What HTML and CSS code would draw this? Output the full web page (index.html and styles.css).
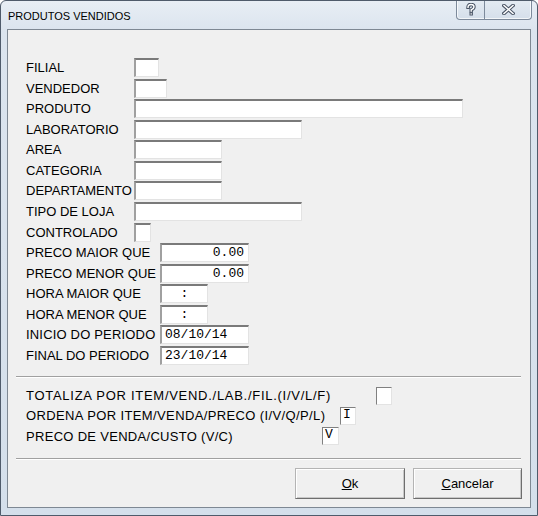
FILE: index.html
```html
<!DOCTYPE html>
<html>
<head>
<meta charset="utf-8">
<link rel="stylesheet" href="styles.css">
</head>
<body>
<div class="window">
  <div class="titlebar">
    <span class="title">PRODUTOS VENDIDOS</span>
    <div class="tbtns">
      <div class="tbtn help">
        <svg width="10" height="13" viewBox="0 0 10 13">
          <path d="M2 4.2 Q2 1.5 5 1.5 Q8 1.5 8 4 Q8 5.6 5.2 6.8 L5.2 8" fill="none" stroke="#4a5566" stroke-width="3.4" stroke-linecap="square"/>
          <rect x="3.5" y="9.3" width="3.4" height="3.2" fill="#4a5566"/>
          <path d="M2 4.2 Q2 1.5 5 1.5 Q8 1.5 8 4 Q8 5.6 5.2 6.8 L5.2 8" fill="none" stroke="#ffffff" stroke-width="1.4" stroke-linecap="square"/>
          <rect x="4.5" y="10.3" width="1.4" height="1.2" fill="#ffffff"/>
        </svg>
      </div>
      <div class="tbtn close">
        <svg width="13" height="11" viewBox="0 0 13 11">
          <path d="M2 1.5 L11 9.5 M11 1.5 L2 9.5" fill="none" stroke="#4a5566" stroke-width="3.6" stroke-linecap="square"/>
          <path d="M2 1.5 L11 9.5 M11 1.5 L2 9.5" fill="none" stroke="#ffffff" stroke-width="1.5" stroke-linecap="square"/>
        </svg>
      </div>
    </div>
  </div>
  <div class="client">
    <div class="rows">
      <div class="row"><span class="lbl l108">FILIAL</span><span class="edit w25"></span></div>
      <div class="row"><span class="lbl l108">VENDEDOR</span><span class="edit w33"></span></div>
      <div class="row"><span class="lbl l108">PRODUTO</span><span class="edit w329"></span></div>
      <div class="row"><span class="lbl l108">LABORATORIO</span><span class="edit w168"></span></div>
      <div class="row"><span class="lbl l108">AREA</span><span class="edit w88"></span></div>
      <div class="row"><span class="lbl l108">CATEGORIA</span><span class="edit w88"></span></div>
      <div class="row"><span class="lbl l108">DEPARTAMENTO</span><span class="edit w88"></span></div>
      <div class="row"><span class="lbl l108">TIPO DE LOJA</span><span class="edit w168"></span></div>
      <div class="row"><span class="lbl l108">CONTROLADO</span><span class="edit w17"></span></div>
      <div class="row"><span class="lbl l134">PRECO MAIOR QUE</span><span class="edit w89 right">0.00</span></div>
      <div class="row"><span class="lbl l134">PRECO MENOR QUE</span><span class="edit w89 right">0.00</span></div>
      <div class="row"><span class="lbl l134">HORA MAIOR QUE</span><span class="edit w48 center">:</span></div>
      <div class="row"><span class="lbl l134">HORA MENOR QUE</span><span class="edit w48 center">:</span></div>
      <div class="row"><span class="lbl l134 ls-a">INICIO DO PERIODO</span><span class="edit w89">08/10/14</span></div>
      <div class="row"><span class="lbl l134">FINAL DO PERIODO</span><span class="edit w89">23/10/14</span></div>
    </div>
    <div class="sep sep1"></div>
    <div class="rows2">
      <div class="row2"><span class="lbl l350 ls-t">TOTALIZA POR ITEM/VEND./LAB./FIL.(I/V/L/F)</span><span class="edit small w16"></span></div>
      <div class="row2"><span class="lbl l314 ls-o">ORDENA POR ITEM/VENDA/PRECO (I/V/Q/P/L)</span><span class="edit small w16">I</span></div>
      <div class="row2"><span class="lbl l296 ls-p">PRECO DE VENDA/CUSTO (V/C)</span><span class="edit small w17">V</span></div>
    </div>
    <div class="sep sep2"></div>
    <div class="buttons">
      <button class="btn ok"><u>O</u>k</button>
      <button class="btn cancel"><u>C</u>ancelar</button>
    </div>
  </div>
</div>
</body>
</html>
```

FILE: styles.css
```css
html, body {
  margin: 0;
  padding: 0;
  background: #ffffff;
}
.window {
  width: 538px;
  height: 516px;
  box-sizing: border-box;
  border: 1px solid #4f5b6b;
  border-radius: 6px 6px 0 0;
  background: linear-gradient(to bottom, #e8eef5 0px, #dbe4ee 30px, #d4dfeb 516px);
  display: flex;
  flex-direction: column;
  font-family: "Liberation Sans", Arial, sans-serif;
  overflow: hidden;
}
.titlebar {
  height: 28px;
  display: flex;
  align-items: flex-start;
  flex-shrink: 0;
}
.title {
  font-size: 11px;
  color: #000;
  margin-left: 7px;
  margin-top: 9px;
  line-height: 12px;
}
.tbtns {
  margin-left: auto;
  margin-right: 5px;
  margin-top: -1px;
  display: flex;
  height: 20px;
  border: 1px solid #7d8a9b;
  border-top: none;
  border-radius: 0 0 4px 4px;
  box-sizing: border-box;
  background: linear-gradient(to bottom, #e4ebf3, #d5dfea);
  box-shadow: inset 0 0 0 1px rgba(255,255,255,0.7);
}
.tbtn {
  display: flex;
  align-items: center;
  justify-content: center;
  height: 19px;
}
.tbtn.help {
  width: 27px;
  border-right: 1px solid #7d8a9b;
}
.tbtn.close {
  width: 46px;
}
.client {
  margin: 0 6px 7px 6px;
  height: 479px;
  box-sizing: border-box;
  border: 1px solid #7e8893;
  background: #f0f0f0;
  display: flex;
  flex-direction: column;
}
.rows {
  padding-top: 28px;
  padding-left: 18px;
  display: flex;
  flex-direction: column;
  gap: 1.57px;
}
.row {
  display: flex;
  align-items: center;
  height: 19px;
}
.lbl {
  font-size: 13px;
  color: #000;
  white-space: nowrap;
  flex-shrink: 0;
  line-height: 15px;
}
.ls-a { letter-spacing: 0.18px; }
.ls-t { letter-spacing: 0.72px; }
.ls-o { letter-spacing: 0.38px; }
.ls-p { letter-spacing: 0.3px; }
.l108 { width: 108px; }
.l134 { width: 134px; }
.l350 { width: 350px; }
.l314 { width: 314px; }
.l296 { width: 296px; }
.edit {
  box-sizing: border-box;
  height: 19px;
  background: #fff;
  border-style: solid;
  border-width: 2px 1px 1px 2px;
  border-color: #7a7a7a #e3e3e3 #e3e3e3 #a0a0a0;
  font-family: "Liberation Mono", "Courier New", monospace;
  font-size: 13px;
  line-height: 15px;
  color: #000;
  padding: 0 3px;
  white-space: nowrap;
  overflow: hidden;
  flex-shrink: 0;
}
.edit.right { text-align: right; padding-right: 4px; }
.edit.center { text-align: center; }
.edit.small { height: 18px; line-height: 14px; padding: 0 2px; border-width: 1px; border-color: #808080 #e3e3e3 #e3e3e3 #808080; }
.w25 { width: 25px; }
.w33 { width: 33px; }
.w329 { width: 329px; }
.w168 { width: 168px; }
.w88 { width: 88px; }
.w17 { width: 17px; }
.w89 { width: 89px; }
.w48 { width: 48px; }
.w16 { width: 16px; }
.sep {
  margin-left: 8px;
  width: 505px;
  height: 0;
  border-top: 1px solid #a0a0a0;
  border-bottom: 1px solid #ffffff;
}
.sep1 { margin-top: 11px; }
.rows2 {
  margin-top: 8.7px;
  padding-left: 18px;
  display: flex;
  flex-direction: column;
  gap: 2.3px;
}
.row2 {
  display: flex;
  align-items: center;
  height: 18px;
}
.sep2 { margin-top: 13px; }
.buttons {
  display: flex;
  justify-content: flex-end;
  gap: 8px;
  margin-top: 8px;
  padding-right: 8px;
}
.btn {
  height: 31px;
  box-sizing: border-box;
  background: #f0f0f0;
  border: 1px solid;
  border-color: #b4b4b4 #6e6e6e #6e6e6e #b4b4b4;
  box-shadow: inset 1px 1px 0 #ffffff, inset -1px -1px 0 #c8c8c8;
  font-family: "Liberation Sans", Arial, sans-serif;
  font-size: 13px;
  color: #000;
  padding: 0;
  margin: 0;
}
.btn.ok { width: 110px; }
.btn.cancel { width: 109px; }
```
